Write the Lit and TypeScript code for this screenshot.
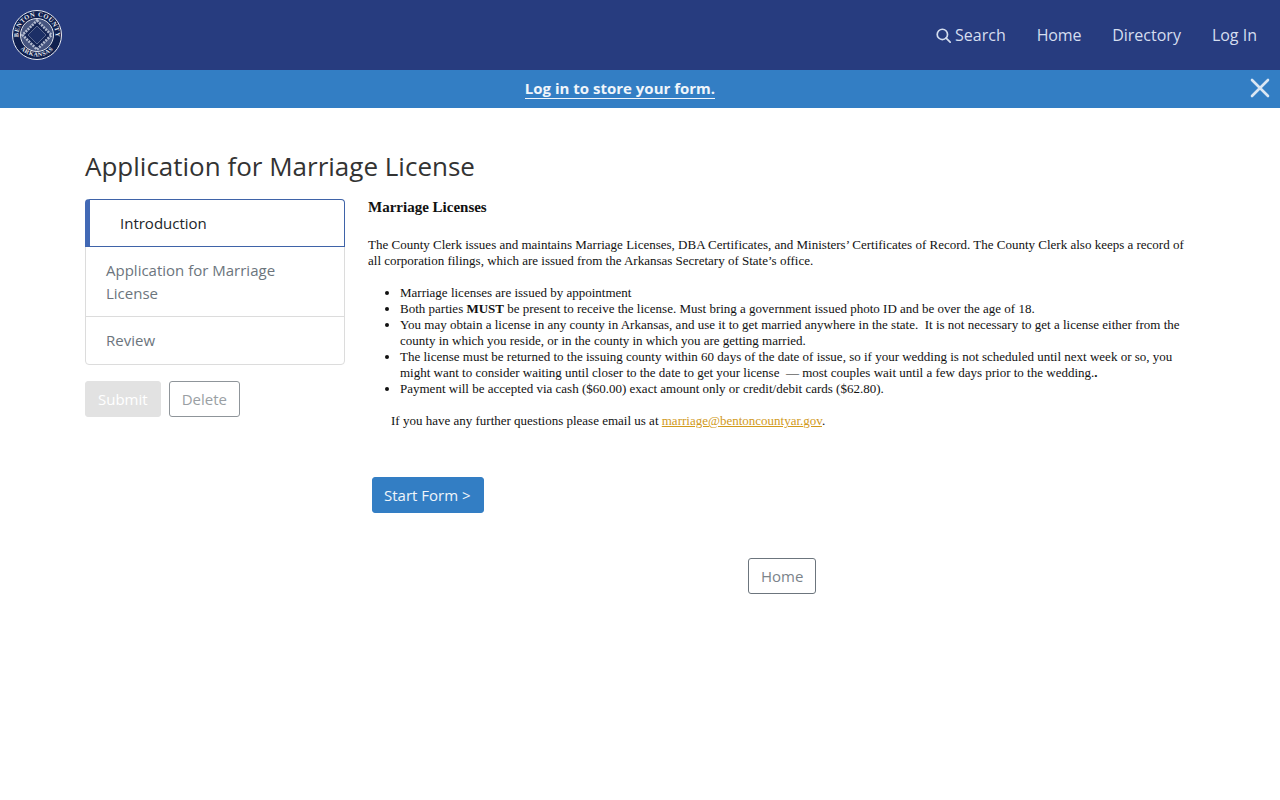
import { LitElement, html, css } from "lit";
import { customElement } from "lit/decorators.js";

@customElement("app-root")
export class AppRoot extends LitElement {
  static styles = css`
    :host {
      display: block;
      min-height: 800px;
      background: #fff;
      font-family: "Open Sans", sans-serif;
      font-size: 15px;
      color: #333;
    }
    a {
      text-decoration: none;
    }

    /* top nav */
    .navbar {
      height: 70px;
      background: #273c7f;
      display: flex;
      align-items: center;
      justify-content: space-between;
      padding: 0 23px 0 12px;
    }
    .logo {
      display: block;
      width: 50px;
      height: 50px;
    }
    .nav-links {
      display: flex;
      gap: 31px;
    }
    .nav-links a {
      display: flex;
      align-items: center;
      gap: 4px;
      color: #d5deef;
      font-size: 16px;
      line-height: 24px;
    }
    .nav-links a.tight {
      letter-spacing: -0.2px;
    }
    .nav-links svg {
      width: 15px;
      height: 15px;
    }

    /* login banner */
    .banner {
      height: 38px;
      padding-right: 40px;
      background: #337ec4;
      display: flex;
      align-items: center;
      justify-content: center;
      position: relative;
    }
    .banner a {
      margin-bottom: 2px;
      color: #f0f5fa;
      font-weight: 700;
      line-height: 20px;
      border-bottom: 1px solid #f0f5fa;
    }
    .close {
      position: absolute;
      right: 10px;
      top: 8px;
      width: 20px;
      height: 20px;
    }

    /* page */
    .container {
      padding: 40px 85px 0;
    }
    h1 {
      margin: 0 0 15px;
      font-size: 26px;
      font-weight: 400;
      line-height: 36px;
      color: #333;
    }
    .row {
      display: flex;
    }
    .side {
      width: 260px;
      flex: none;
      margin-right: 23px;
    }
    .step {
      padding: 12px 20px 11px;
      margin-top: -1px;
      line-height: 23px;
      color: #6c757d;
      border: 1px solid #dcdcdc;
    }
    .step:first-child {
      margin-top: 0;
    }
    .step:last-child {
      padding-bottom: 12px;
      border-radius: 0 0 4px 4px;
    }
    .step.active {
      position: relative;
      padding-left: 30px;
      color: #212529;
      border-color: #3f63a8;
      border-left: 5px solid #4269b5;
      border-radius: 4px 4px 0 0;
    }
    .actions {
      display: flex;
      gap: 8px;
      margin-top: 16px;
    }
    .btn {
      display: inline-block;
      font-size: 15px;
      line-height: 22px;
      padding: 6px 12px;
      border-radius: 3px;
      border: 1px solid transparent;
    }
    .btn.submit {
      background: #e2e2e2;
      border-color: #e2e2e2;
      color: #fff;
    }
    .btn.delete {
      border-color: #8f959a;
      color: #9a9fa4;
    }
    .btn.start {
      padding-left: 11px;
      background: #337ec4;
      border-color: #337ec4;
      color: #f0f5fa;
    }
    .btn.home {
      border-color: #6c757d;
      color: #7b838a;
    }

    .content {
      flex: 1;
      font-family: "Liberation Serif", serif;
      font-size: 13px;
      line-height: 16px;
      color: #111;
    }
    .content h2 {
      margin: 0 0 22px;
      font-size: 15px;
      line-height: 16px;
      font-weight: 700;
    }
    .content p {
      margin: 0 0 16px;
    }
    .content ul {
      margin: 0 0 16px;
      padding-left: 32px;
    }
    .content .question {
      padding-left: 23px;
      margin: 0;
    }
    .content .question a {
      color: #d19a1c;
      text-decoration: underline;
    }
    .start-wrap {
      display: flex;
      margin-top: 48px;
      padding-left: 4px;
      font-family: "Open Sans", sans-serif;
    }
    .home-wrap {
      display: flex;
      margin-top: 45px;
      padding-left: 380px;
      font-family: "Open Sans", sans-serif;
    }
  `;

  render() {
    return html`
      <nav class="navbar">
        <svg class="logo" viewBox="0 0 50 50">
          <defs>
            <path id="arc-top" d="M8.980 34.250A18.500 18.500 0 1 1 41.020 34.250" />
            <path id="arc-bottom" d="M3.500 25a21.500 21.500 0 0 0 43 0" />
          </defs>
          <circle cx="25" cy="25" r="24.500" fill="#10204f" stroke="#e8ebf2" />
          <circle cx="25" cy="25" r="16.500" fill="#46557f" stroke="#dfe3ec" />
          <path d="M25 10.500L39.500 25 25 39.500 10.500 25Z" fill="#142556" stroke="#b4bcd0" stroke-width="2.600" stroke-dasharray="2 1" />
          <path d="M25 16L34 25 25 34 16 25Z" fill="#1c2f66" stroke="#5d6b90" />
          <text font-size="6.500" font-weight="700" fill="#e8ebf2" font-family="Liberation Serif, serif" letter-spacing=".4">
            <textPath href="#arc-top" startOffset="50%" text-anchor="middle">BENTON COUNTY</textPath>
          </text>
          <text font-size="6" font-weight="700" fill="#e8ebf2" font-family="Liberation Serif, serif" letter-spacing=".5">
            <textPath href="#arc-bottom" startOffset="50%" text-anchor="middle">ARKANSAS</textPath>
          </text>
        </svg>
        <div class="nav-links">
          <a href="#">
            <svg viewBox="0 0 16 16" fill="none" stroke="currentColor" stroke-width="1.800" stroke-linecap="round">
              <circle cx="6.800" cy="6.800" r="5.500" /><path d="M10.800 10.800l4.300 4.300" />
            </svg>
            Search
          </a>
          <a class="tight" href="#">Home</a>
          <a href="#">Directory</a>
          <a href="#">Log In</a>
        </div>
      </nav>
      <div class="banner">
        <a href="#">Log in to store your form.</a>
        <svg class="close" viewBox="0 0 20 20" stroke="#dbe6f3" stroke-width="2.600" stroke-linecap="round">
          <path d="M2 2l16 16M18 2L2 18" />
        </svg>
      </div>
      <main class="container">
        <h1>Application for Marriage License</h1>
        <div class="row">
          <aside class="side">
            <div class="steps">
              <div class="step active">Introduction</div>
              <div class="step">Application for Marriage License</div>
              <div class="step">Review</div>
            </div>
            <div class="actions">
              <a class="btn submit">Submit</a>
              <a class="btn delete">Delete</a>
            </div>
          </aside>
          <section class="content">
            <h2>Marriage Licenses</h2>
            <p>
              The County Clerk issues and maintains Marriage Licenses, DBA Certificates, and Ministers’ Certificates of
              Record. The County Clerk also keeps a record of all corporation filings, which are issued from the Arkansas
              Secretary of State’s office.
            </p>
            <ul>
              <li>Marriage licenses are issued by appointment</li>
              <li>Both parties <b>MUST</b> be present to receive the license. Must bring a government issued photo ID and be over the age of 18.</li>
              <li>You may obtain a license in any county in Arkansas, and use it to get married anywhere in the state.&nbsp; It is not necessary to get a license either from the county in which you reside, or in the county in which you are getting married.</li>
              <li>The license must be returned to the issuing county within 60 days of the date of issue, so if your wedding is not scheduled until next week or so, you might want to consider waiting until closer to the date to get your license&nbsp; — most couples wait until a few days prior to the wedding.<b>.</b></li>
              <li>Payment will be accepted via cash ($60.00) exact amount only or credit/debit cards ($62.80).</li>
            </ul>
            <p class="question">
              If you have any further questions please email us at <a href="#">marriage@bentoncountyar.gov</a>.
            </p>
            <div class="start-wrap"><a class="btn start">Start Form &gt;</a></div>
            <div class="home-wrap"><a class="btn home">Home</a></div>
          </section>
        </div>
      </main>
    `;
  }
}
